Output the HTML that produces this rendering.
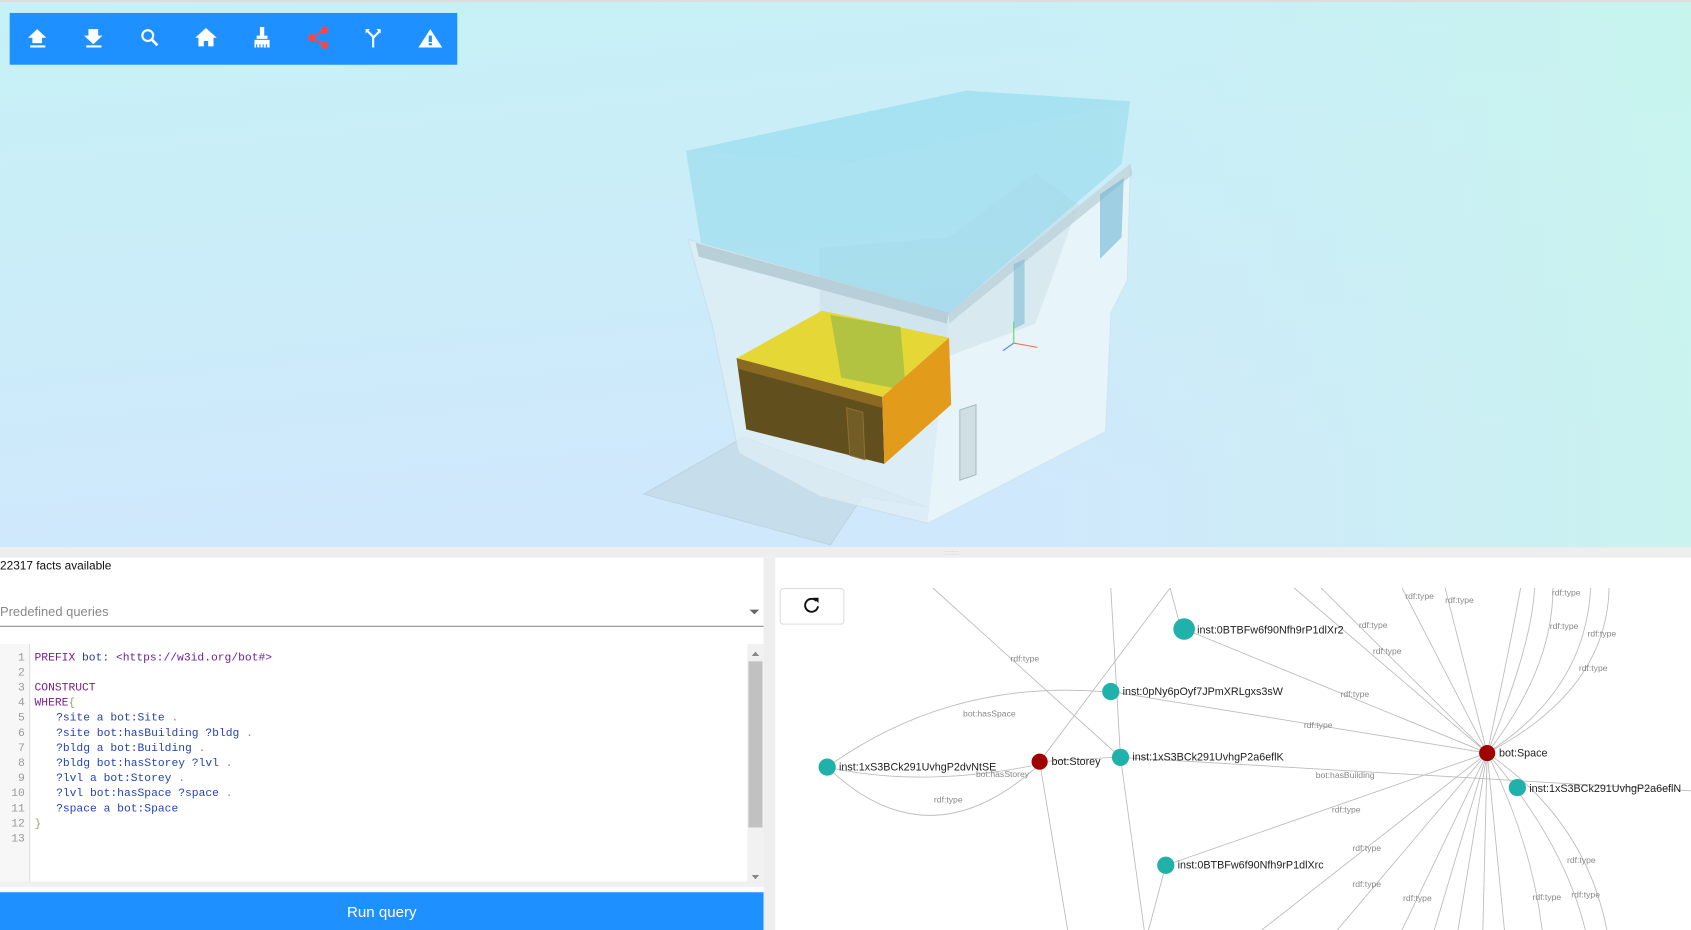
<!DOCTYPE html>
<html><head><meta charset="utf-8"><style>
html,body{margin:0;padding:0;width:1691px;height:930px;overflow:hidden;background:#fff}
svg{display:block}
text{font-family:"Liberation Sans",sans-serif}
.m text,text.mm{font-family:"Liberation Mono",monospace;font-size:10.5px}
.lbl{font-size:8px;fill:#888}
.nd{font-size:10px;fill:#222}
</style></head><body>
<svg width="1691" height="930" viewBox="0 0 1568 862" preserveAspectRatio="none">
<defs>
<linearGradient id="bg" x1="0" y1="0" x2="0.3" y2="1">
<stop offset="0" stop-color="#c6f1f6"/><stop offset="1" stop-color="#d0e8fc"/></linearGradient>
<linearGradient id="bg2" x1="0" y1="0" x2="1" y2="0">
<stop offset="0.6" stop-color="#c8f2f0" stop-opacity="0"/><stop offset="1" stop-color="#c8f6ec" stop-opacity="0.8"/></linearGradient>
</defs>
<rect x="0" y="0" width="1568" height="507" fill="url(#bg)"/>
<rect x="0" y="0" width="1568" height="507" fill="url(#bg2)"/>
<rect x="0" y="0" width="1568" height="2" fill="#ddd"/>
<!-- building -->
<g>
<polygon points="597,458 690,405 860,470 800,460 770,505" fill="#c4dbe8" opacity="0.8" stroke="#b8d0dc" stroke-width="1"/>
<polygon points="638,222 880,290 1048,152 1045,260 1030,290 1025,400 860,485 760,460 685,420 660,300" fill="#e2f0f5" opacity="0.7" stroke="#c8dde6"/>
<polygon points="880,290 1048,152 1045,260 1030,290 1025,400 860,485" fill="#eef8fb" opacity="0.6"/>
<polygon points="645,225 880,290 878,300 648,238" fill="#a9c2cc" opacity="0.7"/>
<polygon points="880,290 1048,152 1050,162 880,300" fill="#b5cdd6" opacity="0.7"/>
<polygon points="760,230 880,220 960,160 1000,190 960,300 880,330 760,290" fill="#b9d2da" opacity="0.3"/>
<polygon points="636,140 896,84 1048,94 1040,152 880,290 650,225" fill="#8cd7ea" opacity="0.5"/>
<polygon points="636,140 896,84 1048,94 790,150" fill="#9fe2f2" opacity="0.4"/>
<polygon points="1020,180 1042,165 1040,220 1020,240" fill="#6fb6d2" opacity="0.6"/>
<polygon points="940,245 950,240 950,300 940,305" fill="#6fb6d2" opacity="0.5"/>
<polygon points="890,380 905,375 905,440 890,445" fill="#cfdfe2" stroke="#a8bcc4"/>
<polygon points="683,332 762,288 880,313 818,368" fill="#e6d521" opacity="0.9"/>
<polygon points="770,292 835,303 840,362 780,350" fill="#a8c043" opacity="0.85"/>
<polygon points="683,332 818,368 820,430 692,398" fill="#614f1d"/>
<polygon points="683,332 818,368 818,378 685,342" fill="#8a6a22"/>
<polygon points="818,368 880,313 882,375 820,430" fill="#e39b1c"/>
<polygon points="785,378 800,382 802,426 788,422" fill="#725d25" stroke="#8b7030"/>
<line x1="930" y1="325" x2="940" y2="318" stroke="#4a7cff"/><line x1="940" y1="318" x2="962" y2="322" stroke="#ff6644"/><line x1="940" y1="318" x2="940" y2="298" stroke="#5fd35f"/>
</g>
<!-- toolbar -->
<rect x="9" y="12" width="415" height="48" fill="#1e90ff"/>
<g fill="#fff">
<path d="M30,40h9v-5h4l-8.5,-8 -8.5,8h4z M28,42h14v2h-14z"/>
<path d="M82,27h9v6h4l-8.5,8 -8.5,-8h4z M80,42h14v2h-14z"/>
<circle cx="137" cy="33" r="5" fill="none" stroke="#fff" stroke-width="2"/><path d="M140,36l6,6" stroke="#fff" stroke-width="2.5"/>
<path d="M191,26l-10,9h3v8h5v-5h4v5h5v-8h3z"/>
<path d="M241,25h4v8h3v3h-10v-3h3z M236,37h14v7h-14z" /><path d="M238,41v3M241,41v3M244,41v3M247,41v3" stroke="#1e90ff"/>
<path d="M339,31l4,-4 -4,0z M353,27l-4,0 4,4z" />
<path d="M341,29l5,5v10M352,29l-6,6" stroke="#fff" stroke-width="2" fill="none"/>
<path d="M399,27l11,17h-22z"/>
</g>
<g stroke="#f44" stroke-width="1.7" fill="#f44"><line x1="289" y1="35" x2="301" y2="28"/><line x1="289" y1="35" x2="301" y2="42"/><circle cx="289" cy="35" r="2.5"/><circle cx="301" cy="28" r="2.5"/><circle cx="301" cy="42" r="2.5"/></g>
<rect x="397.5" y="33" width="3" height="6" fill="#1e90ff"/><rect x="397.5" y="40" width="3" height="2" fill="#1e90ff"/>
<!-- splitters -->
<rect x="0" y="507" width="1568" height="10" fill="#eeeeee"/>
<text x="876" y="514" font-size="6" fill="#bbb">::::::::</text>
<rect x="708" y="517" width="11" height="345" fill="#eeeeee"/>
<text x="710" y="700" font-size="6" fill="#bbb" transform="rotate(90 713 690)">::::::::</text>
<!-- left panel -->
<rect x="0" y="517" width="708" height="345" fill="#fff"/>
<text x="0" y="528" font-size="11" fill="#111">22317 facts available</text>
<text x="0" y="571" font-size="12" fill="#888">Predefined queries</text>
<path d="M695,565h9l-4.5,4.5z" fill="#666"/>
<rect x="0" y="580" width="708" height="1" fill="#888"/>
<rect x="0" y="597" width="708" height="221" fill="#fff"/>
<rect x="0" y="597" width="27" height="221" fill="#f7f7f7"/><rect x="27" y="597" width="1" height="221" fill="#ddd"/>
<rect x="693" y="597" width="15" height="221" fill="#f1f1f1"/><rect x="694" y="613" width="13" height="154" fill="#c1c1c1"/>
<path d="M697,608h7l-3.5,-4z M697,811h7l-3.5,4z" fill="#888"/>
<rect x="0" y="817" width="708" height="5" fill="#f0f0f0"/>
<g class="m" fill="#999" text-anchor="end">
<text x="23" y="612">1</text><text x="23" y="626">2</text><text x="23" y="640">3</text><text x="23" y="654">4</text><text x="23" y="668">5</text><text x="23" y="682">6</text><text x="23" y="696">7</text><text x="23" y="710">8</text><text x="23" y="724">9</text><text x="23" y="738">10</text><text x="23" y="752">11</text><text x="23" y="766">12</text><text x="23" y="780">13</text>
</g>
<g class="m">
<text x="32" y="612"><tspan fill="#7a1f8e">PREFIX</tspan><tspan fill="#2a3b9f"> bot: </tspan><tspan fill="#6a1fa0">&lt;https://w3id.org/bot#&gt;</tspan></text>
<text x="32" y="640" fill="#7a1f8e">CONSTRUCT</text>
<text x="32" y="654"><tspan fill="#7a1f8e">WHERE</tspan><tspan fill="#997">{</tspan></text>
<text x="52" y="668" fill="#2543b3">?site a bot:Site <tspan fill="#888">.</tspan></text>
<text x="52" y="682" fill="#2543b3">?site bot:hasBuilding ?bldg <tspan fill="#888">.</tspan></text>
<text x="52" y="696" fill="#2543b3">?bldg a bot:Building <tspan fill="#888">.</tspan></text>
<text x="52" y="710" fill="#2543b3">?bldg bot:hasStorey ?lvl <tspan fill="#888">.</tspan></text>
<text x="52" y="724" fill="#2543b3">?lvl a bot:Storey <tspan fill="#888">.</tspan></text>
<text x="52" y="738" fill="#2543b3">?lvl bot:hasSpace ?space <tspan fill="#888">.</tspan></text>
<text x="52" y="752" fill="#2543b3">?space a bot:Space</text>
<text x="32" y="766" fill="#997">}</text>
</g>
<rect x="0" y="827" width="708" height="35" fill="#1e90ff"/>
<text x="354" y="850" font-size="14" fill="#fff" text-anchor="middle">Run query</text>
<!-- right panel graph -->
<rect x="719" y="517" width="849" height="345" fill="#fff"/>
<g stroke="#bbb" stroke-width="0.8" fill="none">
<path d="M1379,698L1200,545M1379,698L1225,545M1379,698L1300,545M1379,698L1340,545M1379,698Q1400,600 1410,545M1379,698Q1420,600 1423,545M1379,698Q1440,620 1440,545M1379,698Q1470,640 1475,545M1379,698Q1490,640 1492,545"/>
<path d="M1379,698L1098,583M1379,698L1030,641M1379,698L1081,802M1379,698L1240,862M1379,698L1300,862M1379,698L1330,862M1379,698L1352,862M1379,698L1375,862M1379,698L1395,862M1379,698Q1420,780 1430,862M1379,698Q1450,780 1470,862M1379,698Q1470,760 1490,862M1379,698L1170,862"/>
<path d="M1039,702L1568,733M1039,702L1061,862M1039,702L1030,545M964,706L1085,545M964,706L990,862M1039,702L865,545M1081,802L1065,862M1085,545L1093,575"/>
<path d="M767,711Q880,630 1022,641M767,711Q850,730 956,710M767,711Q860,800 960,712M964,706L1032,702"/>
</g>
<g class="lbl">
<text x="937" y="613">rdf:type</text><text x="893" y="664">bot:hasSpace</text><text x="905" y="720">bot:hasStorey</text><text x="866" y="744">rdf:type</text>
<text x="1209" y="675">rdf:type</text><text x="1243" y="646">rdf:type</text><text x="1260" y="582">rdf:type</text><text x="1273" y="606">rdf:type</text>
<text x="1303" y="555">rdf:type</text><text x="1340" y="559">rdf:type</text><text x="1439" y="552">rdf:type</text><text x="1437" y="583">rdf:type</text><text x="1472" y="590">rdf:type</text><text x="1464" y="622">rdf:type</text>
<text x="1220" y="721">bot:hasBuilding</text><text x="1235" y="753">rdf:type</text><text x="1254" y="789">rdf:type</text><text x="1254" y="822">rdf:type</text><text x="1301" y="835">rdf:type</text>
<text x="1453" y="800">rdf:type</text><text x="1421" y="834">rdf:type</text><text x="1457" y="832">rdf:type</text>
</g>
<g fill="#20b2aa">
<circle cx="1098" cy="583" r="10"/><circle cx="1030" cy="641" r="8"/><circle cx="767" cy="711" r="8"/><circle cx="1039" cy="702" r="8"/><circle cx="1407" cy="730" r="8"/><circle cx="1081" cy="802" r="8"/>
</g>
<g fill="#a00000"><circle cx="964" cy="706" r="7.5"/><circle cx="1379" cy="698" r="7.5"/></g>
<g class="nd">
<text x="1110" y="587">inst:0BTBFw6f90Nfh9rP1dlXr2</text>
<text x="1041" y="644">inst:0pNy6pOyf7JPmXRLgxs3sW</text>
<text x="778" y="714">inst:1xS3BCk291UvhgP2dvNtSE</text>
<text x="975" y="709">bot:Storey</text>
<text x="1050" y="705">inst:1xS3BCk291UvhgP2a6eflK</text>
<text x="1390" y="701">bot:Space</text>
<text x="1418" y="734">inst:1xS3BCk291UvhgP2a6eflN</text>
<text x="1092" y="805">inst:0BTBFw6f90Nfh9rP1dlXrc</text>
</g>
<rect x="723.5" y="545.5" width="59" height="33" rx="3" fill="#fff" stroke="#ddd"/>
<path d="M757,557a6,6 0 1 0 1.5,5" fill="none" stroke="#111" stroke-width="1.8"/><path d="M754,554l5,0 0,5z" fill="#111"/>
</svg>
</body></html>
